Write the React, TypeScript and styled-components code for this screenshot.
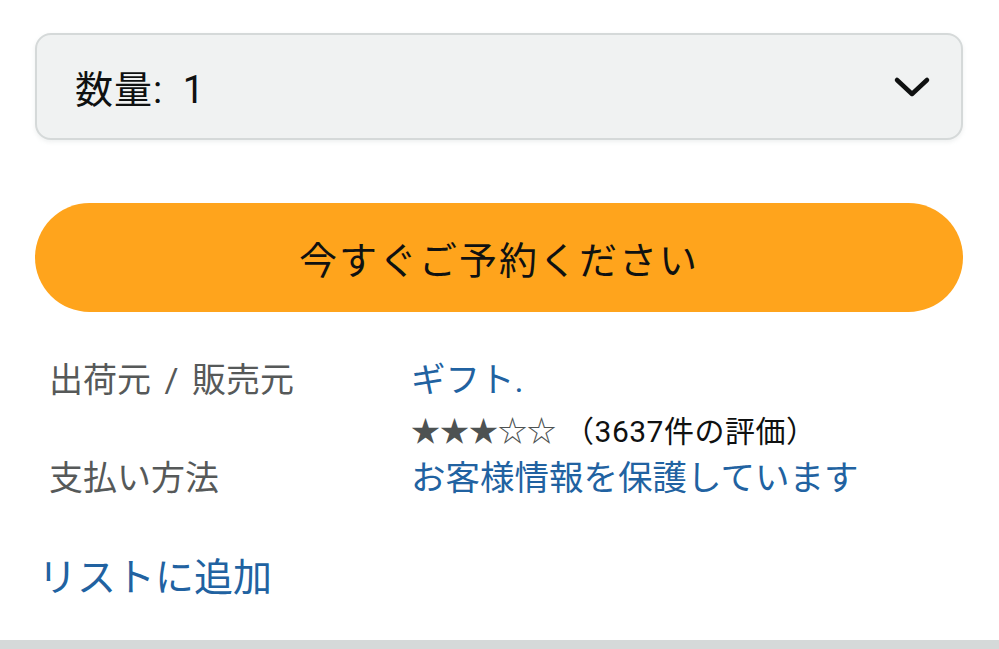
import React from 'react';
import styled, { createGlobalStyle } from 'styled-components';

const GlobalStyle = createGlobalStyle`
  html, body {
    margin: 0;
    padding: 0;
    background: #ffffff;
  }
  body {
    font-family: Roboto, "Noto Sans CJK JP", "Noto Sans", sans-serif;
    color: #0f1111;
  }
`;

const Page = styled.div`
  width: 999px;
  height: 649px;
  overflow: hidden;
  display: flex;
  flex-direction: column;
`;

const Content = styled.div`
  padding: 33px 36px 0 35px;
  display: flex;
  flex-direction: column;
`;

const QtySelect = styled.div`
  height: 107px;
  box-sizing: border-box;
  border: 2px solid #d5d9d9;
  border-radius: 16px;
  background: #f0f2f2;
  display: flex;
  align-items: center;
  justify-content: space-between;
  padding: 0 30px 0 38px;
  font-size: 38px;
  color: #0f1111;
  box-shadow: 0 2px 4px rgba(213, 217, 217, 0.4);
`;

const QtyText = styled.span`
  word-spacing: 9px;
  letter-spacing: 1px;
`;

const BuyButton = styled.button`
  margin-top: 63px;
  height: 109px;
  border: none;
  border-radius: 55px;
  background: #ffa41c;
  color: #0f1111;
  font-family: inherit;
  font-size: 38px;
  letter-spacing: 2px;
  cursor: pointer;
`;

const InfoGrid = styled.div`
  margin-top: 44px;
  padding-left: 14px;
  display: grid;
  grid-template-columns: 362px 1fr;
`;

const Label = styled.div`
  font-size: 34px;
  line-height: 48px;
  word-spacing: 5px;
  color: #565959;
`;

const Value = styled.div`
  display: flex;
  flex-direction: column;
`;

const Link = styled.a`
  font-size: 34.5px;
  line-height: 48px;
  color: #2162a1;
  text-decoration: none;
`;

const RatingLine = styled.div`
  display: flex;
  align-items: center;
  height: 50px;
  font-size: 30px;
  letter-spacing: 0.5px;
  color: #0f1111;
`;

const Stars = styled.span`
  font-family: "Noto Sans CJK JP", sans-serif;
  font-size: 29px;
  letter-spacing: 0;
  color: #4d5252;
  margin-right: 8px;
`;

const AddToList = styled.a`
  margin-top: 52px;
  margin-left: 3px;
  font-size: 39px;
  line-height: 48px;
  color: #2162a1;
  text-decoration: none;
`;

const Divider = styled.div`
  margin-top: auto;
  height: 9px;
  background: #d5d9d9;
`;

const Chevron: React.FC = () => (
  <svg width="38" height="22" viewBox="0 0 38 22">
    <polyline
      points="4,4 19,18 34,4"
      fill="none"
      stroke="#0f1111"
      strokeWidth="4.5"
      strokeLinecap="round"
      strokeLinejoin="round"
    />
  </svg>
);

const App: React.FC = () => {
  return (
    <Page>
      <GlobalStyle />
      <Content>
        <QtySelect>
          <QtyText>数量: 1</QtyText>
          <Chevron />
        </QtySelect>
        <BuyButton>今すぐご予約ください</BuyButton>
        <InfoGrid>
          <Label>出荷元 / 販売元</Label>
          <Value>
            <Link href="#">ギフト.</Link>
            <RatingLine>
              <Stars>★★★☆☆</Stars>
              <span>（3637件の評価）</span>
            </RatingLine>
          </Value>
          <Label>支払い方法</Label>
          <Value>
            <Link href="#">お客様情報を保護しています</Link>
          </Value>
        </InfoGrid>
        <AddToList href="#">リストに追加</AddToList>
      </Content>
      <Divider />
    </Page>
  );
};

export default App;
